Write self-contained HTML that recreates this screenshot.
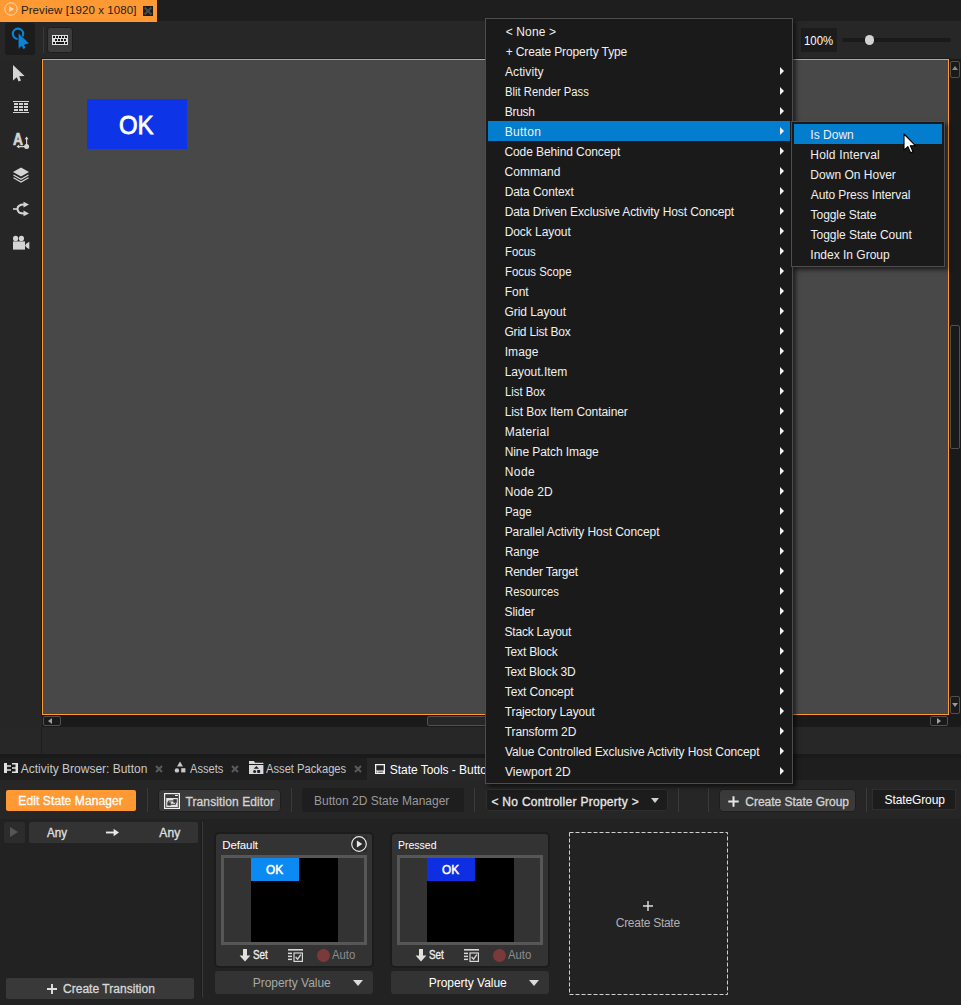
<!DOCTYPE html><html><head><meta charset="utf-8"><title>Preview</title><style>
*{box-sizing:border-box;margin:0;padding:0}
html,body{width:961px;height:1005px;overflow:hidden;background:#262626}
body{font-family:"Liberation Sans", sans-serif;font-size:12px;color:#e6e6e6;position:relative}
.a{position:absolute}
.t{position:absolute;white-space:pre}
.hl{position:absolute;background:#037dce;height:20px}
.ar{position:absolute;left:780px;width:0;height:0;border-left:4.5px solid #f0f0f0;border-top:4px solid transparent;border-bottom:4px solid transparent}
.sep{position:absolute;width:1px;background:#3a3a3a}
.card{position:absolute;top:832px;width:160px;height:136px;background:#333;border:2px solid #1c1c1c;border-radius:5px}
.pv{position:absolute;top:971px;width:158px;height:23px;background:#333;border-radius:3px}
</style></head><body>
<div class="a" style="left:0;top:0;width:961px;height:21px;background:#1e1e1e"></div>
<div class="a" style="left:0;top:21px;width:961px;height:38px;background:#272727"></div>
<div class="a" style="left:0;top:0;width:157px;height:22px;background:#ff9933"></div>
<svg class="a" style="left:4px;top:2px" width="14" height="14" viewBox="0 0 14 14"><circle cx="7" cy="7" r="6.2" fill="none" stroke="#ffd9b0" stroke-width="1"/><path d="M5.2 4 L10 7 L5.2 10 Z" fill="#ffd9b0"/></svg>
<div class="t" style="left:20.9px;top:0px;color:#1e1e1e;font-size:11.5px;line-height:20px;height:20px;letter-spacing:0.089px;">Preview [1920 x 1080]</div>
<div class="a" style="left:143px;top:6px;width:10px;height:10px;background:#1c1c1c"></div>
<svg class="a" style="left:143px;top:6px" width="10" height="10" viewBox="0 0 10 10"><path d="M1.6 1.6 L8.4 8.4 M8.4 1.6 L1.6 8.4" stroke="#4a4a4a" stroke-width="2.1"/></svg>
<div class="a" style="left:5px;top:23px;width:30px;height:32px;background:#1c1c1c;border-radius:3px"></div>
<svg class="a" style="left:5px;top:23px" width="30" height="32" viewBox="0 0 30 32"><circle cx="13" cy="10.8" r="5.2" fill="none" stroke="#0b83d9" stroke-width="2.1"/><path d="M13.1 9.6 L13.1 26.4 L16.6 23.3 L18.3 26.6 L21.1 25.1 L19.5 22 L24.6 20.6 Z" fill="#0b83d9" stroke="#1c1c1c" stroke-width="0.9"/></svg>
<div class="sep" style="left:43px;top:27px;height:26px"></div>
<div class="a" style="left:47px;top:27px;width:26px;height:26px;background:#3c3c3c;border:1px solid #1e1e1e;border-radius:3.5px"></div>
<svg class="a" style="left:52px;top:35px" width="16" height="10" viewBox="0 0 16 10"><rect x="0" y="0" width="16" height="10" fill="#e0e0e0"/><rect x="1" y="1" width="2" height="2" fill="#1a1a1a"/><rect x="4" y="1" width="2" height="2" fill="#1a1a1a"/><rect x="7" y="1" width="2" height="2" fill="#1a1a1a"/><rect x="10" y="1" width="2" height="2" fill="#1a1a1a"/><rect x="13" y="1" width="2" height="2" fill="#1a1a1a"/><rect x="3" y="4" width="2" height="2" fill="#1a1a1a"/><rect x="6" y="4" width="2" height="2" fill="#1a1a1a"/><rect x="9" y="4" width="2" height="2" fill="#1a1a1a"/><rect x="12" y="4" width="2" height="2" fill="#1a1a1a"/><rect x="1" y="7" width="2" height="2" fill="#1a1a1a"/><rect x="4" y="7" width="8" height="2" fill="#1a1a1a"/><rect x="13" y="7" width="2" height="2" fill="#1a1a1a"/></svg>
<div class="a" style="left:801px;top:28px;width:36px;height:24px;background:#1c1c1c"></div>
<div class="t" style="left:804.29px;top:31px;color:#fff;line-height:20px;height:20px;letter-spacing:0px;transform:scaleX(0.9465);transform-origin:0 0;">100%</div>
<div class="a" style="left:842px;top:38px;width:109px;height:4px;background:#1a1a1a;border-radius:2px"></div>
<div class="a" style="left:864.5px;top:35px;width:9.5px;height:9.5px;background:#d2d2d2;border-radius:5px"></div>
<div class="a" style="left:0;top:59px;width:42px;height:694px;background:#262626"></div>
<svg class="a" style="left:12px;top:64px" width="14" height="19" viewBox="0 0 14 19"><path d="M1 1 L1 16.5 L4.8 13.2 L6.6 17.4 L9 16.4 L7.2 12.3 L12.6 12 Z" fill="#d4d4d4"/></svg>
<svg class="a" style="left:13px;top:101px" width="16" height="12" viewBox="0 0 16 12"><rect x="0" y="0" width="16" height="1" fill="#d4d4d4"/><rect x="0" y="11" width="16" height="1" fill="#d4d4d4"/><rect x="1" y="2" width="4" height="2" fill="#d4d4d4"/><rect x="6" y="2" width="4" height="2" fill="#d4d4d4"/><rect x="11" y="2" width="4" height="2" fill="#d4d4d4"/><rect x="1" y="5" width="4" height="2" fill="#d4d4d4"/><rect x="6" y="5" width="4" height="2" fill="#d4d4d4"/><rect x="11" y="5" width="4" height="2" fill="#d4d4d4"/><rect x="1" y="8" width="4" height="2" fill="#d4d4d4"/><rect x="6" y="8" width="4" height="2" fill="#d4d4d4"/><rect x="11" y="8" width="4" height="2" fill="#d4d4d4"/></svg>
<svg class="a" style="left:12px;top:132px" width="18" height="18" viewBox="0 0 18 18"><text x="1.3" y="13" transform="scale(0.83,1)" style="font:700 16.6px Liberation Sans,sans-serif" fill="#d4d4d4" stroke="#d4d4d4" stroke-width="0.7">A</text><circle cx="14.6" cy="14.6" r="2.5" fill="#d4d4d4"/><path d="M14.6 14.6 V6 M14.6 14.6 H6" stroke="#d4d4d4" stroke-width="1.2"/><path d="M12.6 7.2 L14.6 4.4 L16.6 7.2 Z M7.2 12.6 L4.4 14.6 L7.2 16.6 Z" fill="#d4d4d4"/></svg>
<svg class="a" style="left:12px;top:167px" width="18" height="16" viewBox="0 0 18 16"><path d="M9 0.5 L17 5 L9 9.5 L1 5 Z" fill="#d4d4d4"/><path d="M1.5 8 L9 12.2 L16.5 8 M1.5 10.8 L9 15 L16.5 10.8" fill="none" stroke="#d4d4d4" stroke-width="1.3"/></svg>
<svg class="a" style="left:12px;top:201px" width="18" height="16" viewBox="0 0 18 16"><path d="M1 8 H6" stroke="#d4d4d4" stroke-width="1.6" fill="none"/><path d="M12 3.5 C7 3.5 5.5 6 5.5 8 C5.5 10 7 12.5 12 12.5" stroke="#d4d4d4" stroke-width="2" fill="none"/><path d="M11.5 0.8 L17 3.6 L11.5 6.4 Z M11.5 9.6 L17 12.4 L11.5 15.2 Z" fill="#d4d4d4"/></svg>
<svg class="a" style="left:12px;top:235px" width="18" height="16" viewBox="0 0 18 16"><circle cx="3.6" cy="3.4" r="2.6" fill="#d4d4d4"/><circle cx="9.4" cy="3.4" r="2.6" fill="#d4d4d4"/><rect x="1" y="6.4" width="12" height="8.2" fill="#d4d4d4"/><path d="M13 10.5 L14.6 8.6 L17.3 6.8 V14.2 L14.6 12.4 Z" fill="#d4d4d4"/></svg>
<div class="a" style="left:41px;top:58px;width:909px;height:658px;background:#1a1a1a"></div>
<div class="a" style="left:42px;top:59px;width:907px;height:656px;background:#484848;border:1px solid #ff9933"></div>
<div class="a" style="left:87px;top:99px;width:100px;height:50px;background:#0e34e8"></div>
<div class="t" style="left:119.38px;top:99.5px;color:#fff;font-size:26.5px;line-height:51px;height:51px;letter-spacing:0px;-webkit-text-stroke:0.8px #fff;transform:scaleX(0.9031);transform-origin:0 0;">OK</div>
<div class="a" style="left:949px;top:59px;width:12px;height:668px;background:#1a1a1a"></div>
<div class="a" style="left:950px;top:61px;width:10px;height:17px;border:1px solid #505050;border-radius:2px"></div>
<div class="a" style="left:952px;top:66px;width:0;height:0;border-bottom:4px solid #8a8a8a;border-left:3px solid transparent;border-right:3px solid transparent"></div>
<div class="a" style="left:950px;top:325px;width:10px;height:124px;border:1px solid #505050;border-radius:2px"></div>
<div class="a" style="left:950px;top:696px;width:10px;height:18px;border:1px solid #505050;border-radius:2px"></div>
<div class="a" style="left:952px;top:703px;width:0;height:0;border-top:4px solid #9a9a9a;border-left:3px solid transparent;border-right:3px solid transparent"></div>
<div class="a" style="left:42px;top:715px;width:919px;height:12px;background:#1a1a1a"></div>
<div class="a" style="left:43px;top:716px;width:18px;height:10px;border:1px solid #505050;border-radius:2px"></div>
<div class="a" style="left:48px;top:717.5px;width:0;height:0;border-right:4px solid #a0a0a0;border-top:3.5px solid transparent;border-bottom:3.5px solid transparent"></div>
<div class="a" style="left:427px;top:716px;width:120px;height:10px;background:#272727;border:1px solid #505050;border-radius:2px"></div>
<div class="a" style="left:930px;top:716px;width:18px;height:10px;border:1px solid #505050;border-radius:2px"></div>
<div class="a" style="left:937px;top:717.5px;width:0;height:0;border-left:4px solid #a0a0a0;border-top:3.5px solid transparent;border-bottom:3.5px solid transparent"></div>
<div class="a" style="left:0;top:727px;width:961px;height:27px;background:#272727"></div>
<div class="a" style="left:41px;top:727px;width:1px;height:27px;background:#1e1e1e"></div>
<div class="a" style="left:0;top:754px;width:961px;height:4px;background:#1a1a1a"></div>
<div class="a" style="left:0;top:758px;width:961px;height:22px;background:#1e1e1e"></div>
<div class="a" style="left:0;top:780px;width:961px;height:39px;background:#262626"></div>
<div class="a" style="left:0;top:819px;width:961px;height:186px;background:#222"></div>
<svg class="a" style="left:4px;top:763px" width="14" height="10" viewBox="0 0 14 10"><path d="M0 0 H3 V2.2 H7 V3.7 H3 V6.3 H7 V7.8 H3 V10 H0 Z M8 0 H14 V10 H8 V8.4 H11.5 V5.8 H8 V4.2 H11.5 V1.6 H8 Z" fill="#e0e0e0"/></svg>
<div class="t" style="left:20.8px;top:759px;color:#c8c8c8;line-height:20px;height:20px;letter-spacing:-0.006px;">Activity Browser: Button</div>
<svg class="a" style="left:155px;top:765px" width="8" height="8" viewBox="0 0 8 8"><path d="M1 1 L7 7 M7 1 L1 7" stroke="#5a5a5a" stroke-width="2.1"/></svg>
<svg class="a" style="left:174px;top:761px" width="12" height="12" viewBox="0 0 12 12"><path d="M6 0.6 L9 5.4 H3 Z" fill="#c8c8c8"/><circle cx="2.9" cy="9.4" r="2.2" fill="#c8c8c8"/><rect x="7.2" y="7.2" width="4.2" height="4.2" fill="#c8c8c8"/></svg>
<div class="t" style="left:190.3px;top:759px;color:#c8c8c8;line-height:20px;height:20px;letter-spacing:0px;transform:scaleX(0.9260);transform-origin:0 0;">Assets</div>
<svg class="a" style="left:231px;top:765px" width="8" height="8" viewBox="0 0 8 8"><path d="M1 1 L7 7 M7 1 L1 7" stroke="#5a5a5a" stroke-width="2.1"/></svg>
<svg class="a" style="left:249px;top:761px" width="15" height="13" viewBox="0 0 15 13"><path d="M0 0 H5 L6 1.8 H14.4 V3 H0 Z" fill="#d8d8d8"/><rect x="0" y="4" width="14.4" height="9.1" fill="#d8d8d8"/><path d="M7.4 4.9 L10 7.7 H4.8 Z" fill="#1e1e1e"/><circle cx="5.6" cy="10.4" r="1.5" fill="#1e1e1e"/><rect x="8.2" y="9" width="2.9" height="2.9" fill="#1e1e1e"/></svg>
<div class="t" style="left:266.2px;top:759px;color:#c8c8c8;line-height:20px;height:20px;letter-spacing:0px;transform:scaleX(0.9315);transform-origin:0 0;">Asset Packages</div>
<svg class="a" style="left:354px;top:765px" width="8" height="8" viewBox="0 0 8 8"><path d="M1 1 L7 7 M7 1 L1 7" stroke="#5a5a5a" stroke-width="2.1"/></svg>
<div class="a" style="left:367px;top:758px;width:150px;height:22px;background:#272727"></div>
<svg class="a" style="left:375px;top:764px" width="10" height="10" viewBox="0 0 10 10"><rect width="10" height="10" fill="#f4f4f4"/><rect x="1.3" y="1.3" width="7.4" height="5.2" fill="#272727"/><rect x="1.2" y="7.6" width="1.1" height="1.1" fill="#272727"/><rect x="3.2" y="7.7" width="5" height="0.9" fill="#272727"/></svg>
<div class="t" style="left:389.82px;top:760px;color:#fff;line-height:20px;height:20px;letter-spacing:-0.038px;">State Tools - Button</div>
<div class="a" style="left:6px;top:790px;width:130px;height:21px;background:#ff9933;border-radius:2px"></div>
<div class="t" style="left:18.36px;top:791px;color:#fff;line-height:20px;height:20px;letter-spacing:0.098px;-webkit-text-stroke:0.3px currentColor;">Edit State Manager</div>
<div class="sep" style="left:147px;top:788px;height:24px"></div>
<div class="a" style="left:158px;top:789px;width:123px;height:23px;background:#3a3a3a;border:1px solid #1e1e1e;border-radius:4px"></div>
<svg class="a" style="left:164px;top:793px" width="16" height="16" viewBox="0 0 16 16"><rect x="0.6" y="0.6" width="14.8" height="14.8" fill="none" stroke="#f0f0f0" stroke-width="1.2"/><rect x="11" y="2" width="3" height="1" fill="#f0f0f0"/><rect x="2.2" y="5" width="11.6" height="9" fill="#e4e4e4"/><rect x="3.3" y="9.2" width="3.5" height="3.4" fill="#3a3a3a"/><rect x="9.3" y="6.2" width="3.5" height="3.5" fill="#3a3a3a"/><path d="M4.4 9.4 V8 H9.6 M6.6 11.3 H11.6 V9.5" fill="none" stroke="#3a3a3a" stroke-width="1"/></svg>
<div class="t" style="left:185.51px;top:792px;color:#d4d4d4;line-height:20px;height:20px;letter-spacing:0.101px;-webkit-text-stroke:0.3px currentColor;">Transition Editor</div>
<div class="sep" style="left:291px;top:788px;height:24px"></div>
<div class="a" style="left:302px;top:788px;width:162px;height:24px;background:#1e1e1e;border-radius:2px"></div>
<div class="t" style="left:314.06px;top:791px;color:#9a9a9a;line-height:20px;height:20px;letter-spacing:-0.005px;">Button 2D State Manager</div>
<div class="sep" style="left:474px;top:788px;height:24px"></div>
<div class="a" style="left:486px;top:789px;width:182px;height:22px;background:#1c1c1c;border:1px solid #2e2e2e;border-radius:2px"></div>
<div class="t" style="left:491.44px;top:792px;color:#e8e8e8;line-height:20px;height:20px;letter-spacing:0.286px;-webkit-text-stroke:0.3px currentColor;">&lt; No Controller Property &gt;</div>
<div class="a" style="left:651px;top:798px;width:0;height:0;border-top:5px solid #d0d0d0;border-left:4px solid transparent;border-right:4px solid transparent"></div>
<div class="sep" style="left:678px;top:788px;height:24px"></div>
<div class="sep" style="left:708px;top:788px;height:24px"></div>
<div class="a" style="left:719px;top:789px;width:137px;height:23px;background:#3a3a3a;border:1px solid #1e1e1e;border-radius:4px"></div>
<svg class="a" style="left:727.5px;top:795.5px" width="11" height="11" viewBox="0 0 11 11"><path d="M5.5 0.3 V10.7 M0.3 5.5 H10.7" stroke="#e8e8e8" stroke-width="2"/></svg>
<div class="t" style="left:745.34px;top:792px;color:#d4d4d4;line-height:20px;height:20px;letter-spacing:-0.024px;-webkit-text-stroke:0.3px currentColor;">Create State Group</div>
<div class="sep" style="left:866px;top:788px;height:24px"></div>
<div class="a" style="left:872px;top:789px;width:84px;height:21px;background:#1c1c1c;border:1px solid #2e2e2e"></div>
<div class="t" style="left:884.52px;top:790px;color:#fff;line-height:20px;height:20px;letter-spacing:-0.112px;">StateGroup</div>
<div class="a" style="left:4px;top:822px;width:21px;height:21px;background:#2c2c2c;border-radius:2px"></div>
<div class="a" style="left:10px;top:827px;width:0;height:0;border-left:8px solid #555;border-top:5.5px solid transparent;border-bottom:5.5px solid transparent"></div>
<div class="a" style="left:29px;top:822px;width:169px;height:21px;background:#333;border-radius:2px"></div>
<div class="t" style="left:46.7px;top:823px;color:#e0e0e0;line-height:20px;height:20px;letter-spacing:0px;-webkit-text-stroke:0.3px currentColor;transform:scaleX(0.9672);transform-origin:0 0;">Any</div>
<div class="t" style="left:159.3px;top:823px;color:#e0e0e0;line-height:20px;height:20px;letter-spacing:0.161px;-webkit-text-stroke:0.3px currentColor;">Any</div>
<svg class="a" style="left:106px;top:827.5px" width="13" height="9" viewBox="0 0 13 9"><path d="M0 4.5 H9" stroke="#e8e8e8" stroke-width="1.9"/><path d="M7.6 0.8 L13 4.5 L7.6 8.2 Z" fill="#e8e8e8"/></svg>
<div class="a" style="left:6px;top:978px;width:188px;height:21px;background:#393939;border-radius:2px"></div>
<svg class="a" style="left:47px;top:983.5px" width="10" height="10" viewBox="0 0 10 10"><path d="M5 0 V10 M0 5 H10" stroke="#e0e0e0" stroke-width="1.9"/></svg>
<div class="t" style="left:62.94px;top:978.5px;color:#d8d8d8;line-height:21px;height:21px;letter-spacing:0.04px;-webkit-text-stroke:0.3px currentColor;">Create Transition</div>
<div class="a" style="left:201px;top:822px;width:1px;height:175px;background:#1a1a1a"></div>
<div class="a" style="left:202px;top:822px;width:1px;height:175px;background:#3a3a3a"></div>
<div class="card" style="left:214px"></div>
<div class="t" style="left:222.2px;top:835px;color:#fff;font-size:11.5px;line-height:20px;height:20px;letter-spacing:-0.096px;">Default</div>
<svg class="a" style="left:351px;top:836px" width="16" height="16" viewBox="0 0 16 16"><rect width="16" height="16" fill="#2b2b2b"/><circle cx="8" cy="8" r="7.3" fill="none" stroke="#e8e8e8" stroke-width="1.2"/><path d="M5.9 4.5 L11.3 8 L5.9 11.5 Z" fill="#e8e8e8"/></svg>
<div class="a" style="left:221px;top:855px;width:146px;height:90px;background:#333;border:3px solid #575757"></div>
<div class="a" style="left:250.5px;top:858px;width:87px;height:84px;background:#000"></div>
<div class="a" style="left:250.5px;top:858px;width:48.8px;height:23px;background:#0a8af2"></div>
<div class="t" style="left:265.85px;top:858px;color:#fff;font-size:13.4px;line-height:23px;height:23px;letter-spacing:0px;-webkit-text-stroke:0.55px #fff;transform:scaleX(0.8823);transform-origin:0 0;">OK</div>
<svg class="a" style="left:239px;top:949px" width="12" height="13" viewBox="0 0 12 13"><path d="M4 0 H8 V6.5 H11.4 L6 12.6 L0.6 6.5 H4 Z" fill="#e0e0e0"/></svg>
<div class="t" style="left:253.39px;top:945px;color:#f0f0f0;line-height:20px;height:20px;letter-spacing:0px;-webkit-text-stroke:0.3px currentColor;transform:scaleX(0.8259);transform-origin:0 0;">Set</div>
<svg class="a" style="left:288px;top:949px" width="15" height="13" viewBox="0 0 15 13"><rect x="0" y="0" width="15" height="1.6" fill="#d8d8d8"/><rect x="0" y="3.6" width="4" height="1.5" fill="#d8d8d8"/><rect x="0" y="6.6" width="4" height="1.5" fill="#d8d8d8"/><rect x="0" y="9.6" width="4" height="1.5" fill="#d8d8d8"/><rect x="6" y="4" width="8.4" height="8.4" fill="none" stroke="#d8d8d8" stroke-width="1.2"/><path d="M7.6 8 L9.6 10.2 L12.8 5.6" fill="none" stroke="#d8d8d8" stroke-width="1.3"/></svg>
<div class="a" style="left:317px;top:949px;width:13px;height:13px;border-radius:7px;background:#7a3a3a"></div>
<div class="t" style="left:332.4px;top:945px;color:#8c8c8c;line-height:20px;height:20px;letter-spacing:0px;transform:scaleX(0.9422);transform-origin:0 0;">Auto</div>
<div class="pv" style="left:215px"></div>
<div class="t" style="left:252.76px;top:973px;color:#a8a8a8;line-height:20px;height:20px;letter-spacing:-0.036px;">Property Value</div>
<div class="a" style="left:352.7px;top:980px;width:0;height:0;border-top:6.2px solid #dcdcdc;border-left:5.3px solid transparent;border-right:5.3px solid transparent"></div>
<div class="card" style="left:390px"></div>
<div class="t" style="left:398.28px;top:835px;color:#fff;font-size:11.5px;line-height:20px;height:20px;letter-spacing:0px;transform:scaleX(0.9128);transform-origin:0 0;">Pressed</div>
<div class="a" style="left:397px;top:855px;width:146px;height:90px;background:#333;border:3px solid #575757"></div>
<div class="a" style="left:426.5px;top:858px;width:87px;height:84px;background:#000"></div>
<div class="a" style="left:426.5px;top:858px;width:48.8px;height:23px;background:#0e2ee2"></div>
<div class="t" style="left:441.85px;top:858px;color:#fff;font-size:13.4px;line-height:23px;height:23px;letter-spacing:0px;-webkit-text-stroke:0.55px #fff;transform:scaleX(0.8823);transform-origin:0 0;">OK</div>
<svg class="a" style="left:415px;top:949px" width="12" height="13" viewBox="0 0 12 13"><path d="M4 0 H8 V6.5 H11.4 L6 12.6 L0.6 6.5 H4 Z" fill="#e0e0e0"/></svg>
<div class="t" style="left:429.39px;top:945px;color:#f0f0f0;line-height:20px;height:20px;letter-spacing:0px;-webkit-text-stroke:0.3px currentColor;transform:scaleX(0.8259);transform-origin:0 0;">Set</div>
<svg class="a" style="left:464px;top:949px" width="15" height="13" viewBox="0 0 15 13"><rect x="0" y="0" width="15" height="1.6" fill="#d8d8d8"/><rect x="0" y="3.6" width="4" height="1.5" fill="#d8d8d8"/><rect x="0" y="6.6" width="4" height="1.5" fill="#d8d8d8"/><rect x="0" y="9.6" width="4" height="1.5" fill="#d8d8d8"/><rect x="6" y="4" width="8.4" height="8.4" fill="none" stroke="#d8d8d8" stroke-width="1.2"/><path d="M7.6 8 L9.6 10.2 L12.8 5.6" fill="none" stroke="#d8d8d8" stroke-width="1.3"/></svg>
<div class="a" style="left:493px;top:949px;width:13px;height:13px;border-radius:7px;background:#7a3a3a"></div>
<div class="t" style="left:508.4px;top:945px;color:#8c8c8c;line-height:20px;height:20px;letter-spacing:0px;transform:scaleX(0.9422);transform-origin:0 0;">Auto</div>
<div class="pv" style="left:391px"></div>
<div class="t" style="left:428.76px;top:973px;color:#fff;line-height:20px;height:20px;letter-spacing:-0.036px;">Property Value</div>
<div class="a" style="left:528.7px;top:980px;width:0;height:0;border-top:6.2px solid #dcdcdc;border-left:5.3px solid transparent;border-right:5.3px solid transparent"></div>
<svg class="a" style="left:569px;top:832px" width="159" height="163" viewBox="0 0 159 163"><rect x="0.5" y="0.5" width="158" height="162" fill="none" stroke="#d0d0d0" stroke-width="1" stroke-dasharray="4 2"/></svg>
<svg class="a" style="left:643px;top:901px" width="10" height="10" viewBox="0 0 10 10"><path d="M5 0 V10 M0 5 H10" stroke="#e0e0e0" stroke-width="1.4"/></svg>
<div class="t" style="left:615.74px;top:913px;color:#b0b0b0;line-height:20px;height:20px;letter-spacing:-0.275px;">Create State</div>
<div class="a" style="left:485px;top:18px;width:308px;height:766px;background:#1a1a1a;border:1px solid #4d4d4d;box-shadow:3px 3px 4px rgba(0,0,0,.55)"></div>
<div class="hl" style="left:488px;top:121px;width:302px"></div>
<div class="t" style="left:505.64px;top:22px;color:#f0f0f0;line-height:20px;height:20px;letter-spacing:0.148px;">&lt; None &gt;</div>
<div class="t" style="left:505.64px;top:42px;color:#f0f0f0;line-height:20px;height:20px;letter-spacing:-0.121px;">+ Create Property Type</div>
<div class="t" style="left:505.0px;top:62px;color:#f0f0f0;line-height:20px;height:20px;letter-spacing:0.085px;">Activity</div>
<div class="ar" style="top:67px"></div>
<div class="t" style="left:504.72px;top:82px;color:#f0f0f0;line-height:20px;height:20px;letter-spacing:0px;transform:scaleX(0.9380);transform-origin:0 0;">Blit Render Pass</div>
<div class="ar" style="top:87px"></div>
<div class="t" style="left:504.66px;top:102px;color:#f0f0f0;line-height:20px;height:20px;letter-spacing:-0.259px;">Brush</div>
<div class="ar" style="top:107px"></div>
<div class="t" style="left:504.66px;top:122px;color:#f0f0f0;line-height:20px;height:20px;letter-spacing:0.304px;">Button</div>
<div class="ar" style="top:127px"></div>
<div class="t" style="left:504.44px;top:142px;color:#f0f0f0;line-height:20px;height:20px;letter-spacing:-0.089px;">Code Behind Concept</div>
<div class="ar" style="top:147px"></div>
<div class="t" style="left:504.44px;top:162px;color:#f0f0f0;line-height:20px;height:20px;letter-spacing:0.114px;">Command</div>
<div class="ar" style="top:167px"></div>
<div class="t" style="left:504.66px;top:182px;color:#f0f0f0;line-height:20px;height:20px;letter-spacing:-0.076px;">Data Context</div>
<div class="ar" style="top:187px"></div>
<div class="t" style="left:504.66px;top:202px;color:#f0f0f0;line-height:20px;height:20px;letter-spacing:-0.108px;">Data Driven Exclusive Activity Host Concept</div>
<div class="ar" style="top:207px"></div>
<div class="t" style="left:504.66px;top:222px;color:#f0f0f0;line-height:20px;height:20px;letter-spacing:-0.061px;">Dock Layout</div>
<div class="ar" style="top:227px"></div>
<div class="t" style="left:504.72px;top:242px;color:#f0f0f0;line-height:20px;height:20px;letter-spacing:0px;transform:scaleX(0.9405);transform-origin:0 0;">Focus</div>
<div class="ar" style="top:247px"></div>
<div class="t" style="left:504.71px;top:262px;color:#f0f0f0;line-height:20px;height:20px;letter-spacing:0px;transform:scaleX(0.9503);transform-origin:0 0;">Focus Scope</div>
<div class="ar" style="top:267px"></div>
<div class="t" style="left:504.66px;top:282px;color:#f0f0f0;line-height:20px;height:20px;letter-spacing:-0.005px;">Font</div>
<div class="ar" style="top:287px"></div>
<div class="t" style="left:504.44px;top:302px;color:#f0f0f0;line-height:20px;height:20px;letter-spacing:-0.051px;">Grid Layout</div>
<div class="ar" style="top:307px"></div>
<div class="t" style="left:504.44px;top:322px;color:#f0f0f0;line-height:20px;height:20px;letter-spacing:-0.194px;">Grid List Box</div>
<div class="ar" style="top:327px"></div>
<div class="t" style="left:504.66px;top:342px;color:#f0f0f0;line-height:20px;height:20px;letter-spacing:0.093px;">Image</div>
<div class="ar" style="top:347px"></div>
<div class="t" style="left:504.66px;top:362px;color:#f0f0f0;line-height:20px;height:20px;letter-spacing:-0.014px;">Layout.Item</div>
<div class="ar" style="top:367px"></div>
<div class="t" style="left:504.72px;top:382px;color:#f0f0f0;line-height:20px;height:20px;letter-spacing:0px;transform:scaleX(0.9438);transform-origin:0 0;">List Box</div>
<div class="ar" style="top:387px"></div>
<div class="t" style="left:504.66px;top:402px;color:#f0f0f0;line-height:20px;height:20px;letter-spacing:-0.069px;">List Box Item Container</div>
<div class="ar" style="top:407px"></div>
<div class="t" style="left:504.66px;top:422px;color:#f0f0f0;line-height:20px;height:20px;letter-spacing:0.25px;">Material</div>
<div class="ar" style="top:427px"></div>
<div class="t" style="left:504.66px;top:442px;color:#f0f0f0;line-height:20px;height:20px;letter-spacing:-0.084px;">Nine Patch Image</div>
<div class="ar" style="top:447px"></div>
<div class="t" style="left:504.66px;top:462px;color:#f0f0f0;line-height:20px;height:20px;letter-spacing:0.479px;">Node</div>
<div class="ar" style="top:467px"></div>
<div class="t" style="left:504.66px;top:482px;color:#f0f0f0;line-height:20px;height:20px;letter-spacing:0.115px;">Node 2D</div>
<div class="ar" style="top:487px"></div>
<div class="t" style="left:504.71px;top:502px;color:#f0f0f0;line-height:20px;height:20px;letter-spacing:0px;transform:scaleX(0.9511);transform-origin:0 0;">Page</div>
<div class="ar" style="top:507px"></div>
<div class="t" style="left:504.66px;top:522px;color:#f0f0f0;line-height:20px;height:20px;letter-spacing:-0.065px;">Parallel Activity Host Concept</div>
<div class="ar" style="top:527px"></div>
<div class="t" style="left:504.7px;top:542px;color:#f0f0f0;line-height:20px;height:20px;letter-spacing:0px;transform:scaleX(0.9606);transform-origin:0 0;">Range</div>
<div class="ar" style="top:547px"></div>
<div class="t" style="left:504.66px;top:562px;color:#f0f0f0;line-height:20px;height:20px;letter-spacing:-0.196px;">Render Target</div>
<div class="ar" style="top:567px"></div>
<div class="t" style="left:504.72px;top:582px;color:#f0f0f0;line-height:20px;height:20px;letter-spacing:0px;transform:scaleX(0.9385);transform-origin:0 0;">Resources</div>
<div class="ar" style="top:587px"></div>
<div class="t" style="left:504.62px;top:602px;color:#f0f0f0;line-height:20px;height:20px;letter-spacing:-0.089px;">Slider</div>
<div class="ar" style="top:607px"></div>
<div class="t" style="left:504.62px;top:622px;color:#f0f0f0;line-height:20px;height:20px;letter-spacing:-0.24px;">Stack Layout</div>
<div class="ar" style="top:627px"></div>
<div class="t" style="left:504.81px;top:642px;color:#f0f0f0;line-height:20px;height:20px;letter-spacing:-0.198px;">Text Block</div>
<div class="ar" style="top:647px"></div>
<div class="t" style="left:504.81px;top:662px;color:#f0f0f0;line-height:20px;height:20px;letter-spacing:-0.205px;">Text Block 3D</div>
<div class="ar" style="top:667px"></div>
<div class="t" style="left:504.81px;top:682px;color:#f0f0f0;line-height:20px;height:20px;letter-spacing:-0.117px;">Text Concept</div>
<div class="ar" style="top:687px"></div>
<div class="t" style="left:504.81px;top:702px;color:#f0f0f0;line-height:20px;height:20px;letter-spacing:-0.132px;">Trajectory Layout</div>
<div class="ar" style="top:707px"></div>
<div class="t" style="left:504.81px;top:722px;color:#f0f0f0;line-height:20px;height:20px;letter-spacing:-0.127px;">Transform 2D</div>
<div class="ar" style="top:727px"></div>
<div class="t" style="left:505.0px;top:742px;color:#f0f0f0;line-height:20px;height:20px;letter-spacing:-0.087px;">Value Controlled Exclusive Activity Host Concept</div>
<div class="ar" style="top:747px"></div>
<div class="t" style="left:505.0px;top:762px;color:#f0f0f0;line-height:20px;height:20px;letter-spacing:0.047px;">Viewport 2D</div>
<div class="ar" style="top:767px"></div>
<div class="a" style="left:791px;top:121px;width:154px;height:146px;background:#1a1a1a;border:1px solid #4d4d4d;box-shadow:3px 3px 4px rgba(0,0,0,.55)"></div>
<div class="hl" style="left:794px;top:124px;width:148px"></div>
<div class="t" style="left:810.36px;top:125px;color:#f0f0f0;line-height:20px;height:20px;letter-spacing:0.011px;">Is Down</div>
<div class="t" style="left:810.36px;top:145px;color:#f0f0f0;line-height:20px;height:20px;letter-spacing:0.164px;">Hold Interval</div>
<div class="t" style="left:810.36px;top:165px;color:#f0f0f0;line-height:20px;height:20px;letter-spacing:0.011px;">Down On Hover</div>
<div class="t" style="left:810.8px;top:185px;color:#f0f0f0;line-height:20px;height:20px;letter-spacing:-0.099px;">Auto Press Interval</div>
<div class="t" style="left:810.61px;top:205px;color:#f0f0f0;line-height:20px;height:20px;letter-spacing:-0.076px;">Toggle State</div>
<div class="t" style="left:810.61px;top:225px;color:#f0f0f0;line-height:20px;height:20px;letter-spacing:-0.054px;">Toggle State Count</div>
<div class="t" style="left:810.36px;top:245px;color:#f0f0f0;line-height:20px;height:20px;letter-spacing:-0.005px;">Index In Group</div>
<svg class="a" style="left:902.5px;top:133px" width="14" height="21" viewBox="0 0 14 21"><path d="M1 1 L1 17.2 L4.8 13.6 L7.6 19.8 L10 18.8 L7.3 12.8 L12.4 12.6 Z" fill="#fff" stroke="#000" stroke-width="1.1" stroke-linejoin="round"/></svg>
</body></html>
